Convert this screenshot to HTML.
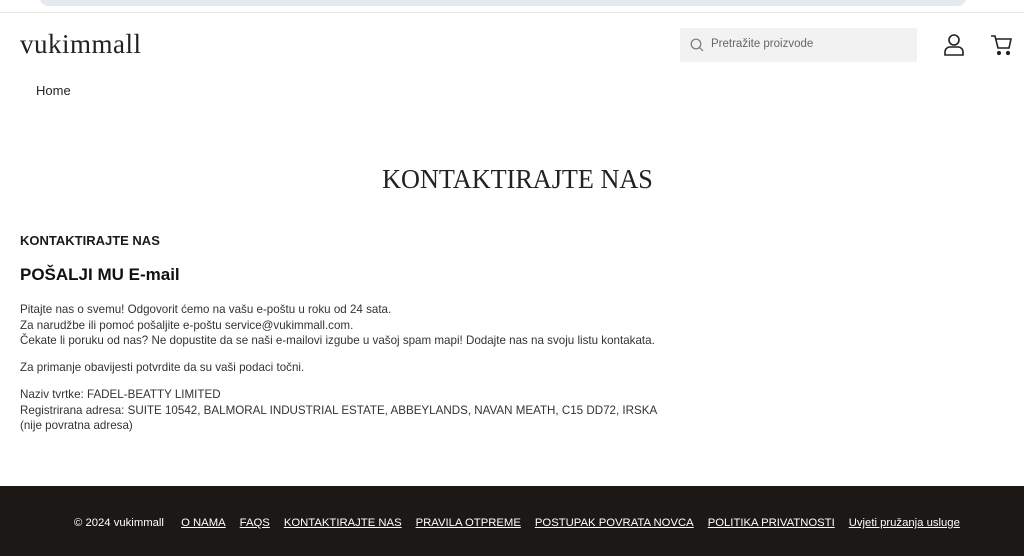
<!DOCTYPE html>
<html><head><meta charset="utf-8"><style>
*{margin:0;padding:0;box-sizing:border-box}
body{width:1024px;height:556px;overflow:hidden;background:#fff;font-family:"Liberation Sans",sans-serif;color:#1a1a1a;position:relative}
.topbar{position:absolute;left:40px;top:-10px;width:926px;height:16px;background:#e6e9f2;border-radius:8px}
.line{position:absolute;left:0;top:12px;width:1024px;height:1px;background:#e6e6e6}
.logo{position:absolute;left:20px;top:29px;font-family:"Liberation Serif",serif;font-size:27px;color:#222;letter-spacing:0.5px}
.search{position:absolute;left:680px;top:28px;width:237px;height:34px;background:#f2f2f2;border-radius:2px}
.search span{position:absolute;left:31px;top:10px;font-size:11.5px;color:#666}
.home{position:absolute;left:36px;top:83px;font-size:13px;color:#222}
h1{position:absolute;left:0;width:1035px;top:164px;text-align:center;font-family:"Liberation Serif",serif;font-weight:normal;font-size:27px;color:#222;transform:scaleX(0.97)}
.h3{position:absolute;left:20px;top:233px;font-size:13px;font-weight:bold}
.h2{position:absolute;left:20px;top:265px;font-size:17px;font-weight:bold;color:#111}
.p{position:absolute;left:20px;font-size:11.6px;line-height:15.5px;color:#333}
footer{position:absolute;left:0;top:486px;width:1024px;height:70px;background:#1b1815;color:#fff;font-size:11.3px}
footer .row{position:absolute;top:31px;left:74px;white-space:nowrap}
footer a{color:#fff;text-decoration:underline;margin-left:14px}
</style></head><body>
<div class="topbar"></div><div class="line"></div>
<div class="logo">vukimmall</div>
<div class="search"><svg style="position:absolute;left:10px;top:10px" width="14" height="14" viewBox="0 0 14 14" fill="none" stroke="#777" stroke-width="1.2"><circle cx="6" cy="6" r="4.8"/><path d="M9.5 9.5L13 13"/></svg><span>Pretražite proizvode</span></div>
<svg style="position:absolute;left:943px;top:33px" width="22" height="24" viewBox="0 0 22 24" fill="none" stroke="#222" stroke-width="1.6"><circle cx="11" cy="7" r="5"/><path d="M2 22v-3a5 5 0 0 1 5-5h8a5 5 0 0 1 5 5v3z"/></svg>
<svg style="position:absolute;left:990px;top:34px" width="24" height="22" viewBox="0 0 24 22" fill="none" stroke="#222" stroke-width="1.6"><path d="M1 2h4l3 12h11l2-9H6"/><circle cx="9" cy="19" r="1.3" fill="#222"/><circle cx="18" cy="19" r="1.3" fill="#222"/></svg>
<div class="home">Home</div>
<h1>KONTAKTIRAJTE NAS</h1>
<div class="h3">KONTAKTIRAJTE NAS</div>
<div class="h2">POŠALJI MU E-mail</div>
<div class="p" style="top:302px">Pitajte nas o svemu! Odgovorit ćemo na vašu e-poštu u roku od 24 sata.<br>Za narudžbe ili pomoć pošaljite e-poštu service@vukimmall.com.<br>Čekate li poruku od nas? Ne dopustite da se naši e-mailovi izgube u vašoj spam mapi! Dodajte nas na svoju listu kontakata.</div>
<div class="p" style="top:360px">Za primanje obavijesti potvrdite da su vaši podaci točni.</div>
<div class="p" style="top:387px">Naziv tvrtke: FADEL-BEATTY LIMITED<br>Registrirana adresa: SUITE 10542, BALMORAL INDUSTRIAL ESTATE, ABBEYLANDS, NAVAN MEATH, C15 DD72, IRSKA<br>(nije povratna adresa)</div>
<footer><div class="row">© 2024 vukimmall <a>O NAMA</a><a>FAQS</a><a>KONTAKTIRAJTE NAS</a><a>PRAVILA OTPREME</a><a>POSTUPAK POVRATA NOVCA</a><a>POLITIKA PRIVATNOSTI</a><a>Uvjeti pružanja usluge</a></div></footer>
</body></html>
